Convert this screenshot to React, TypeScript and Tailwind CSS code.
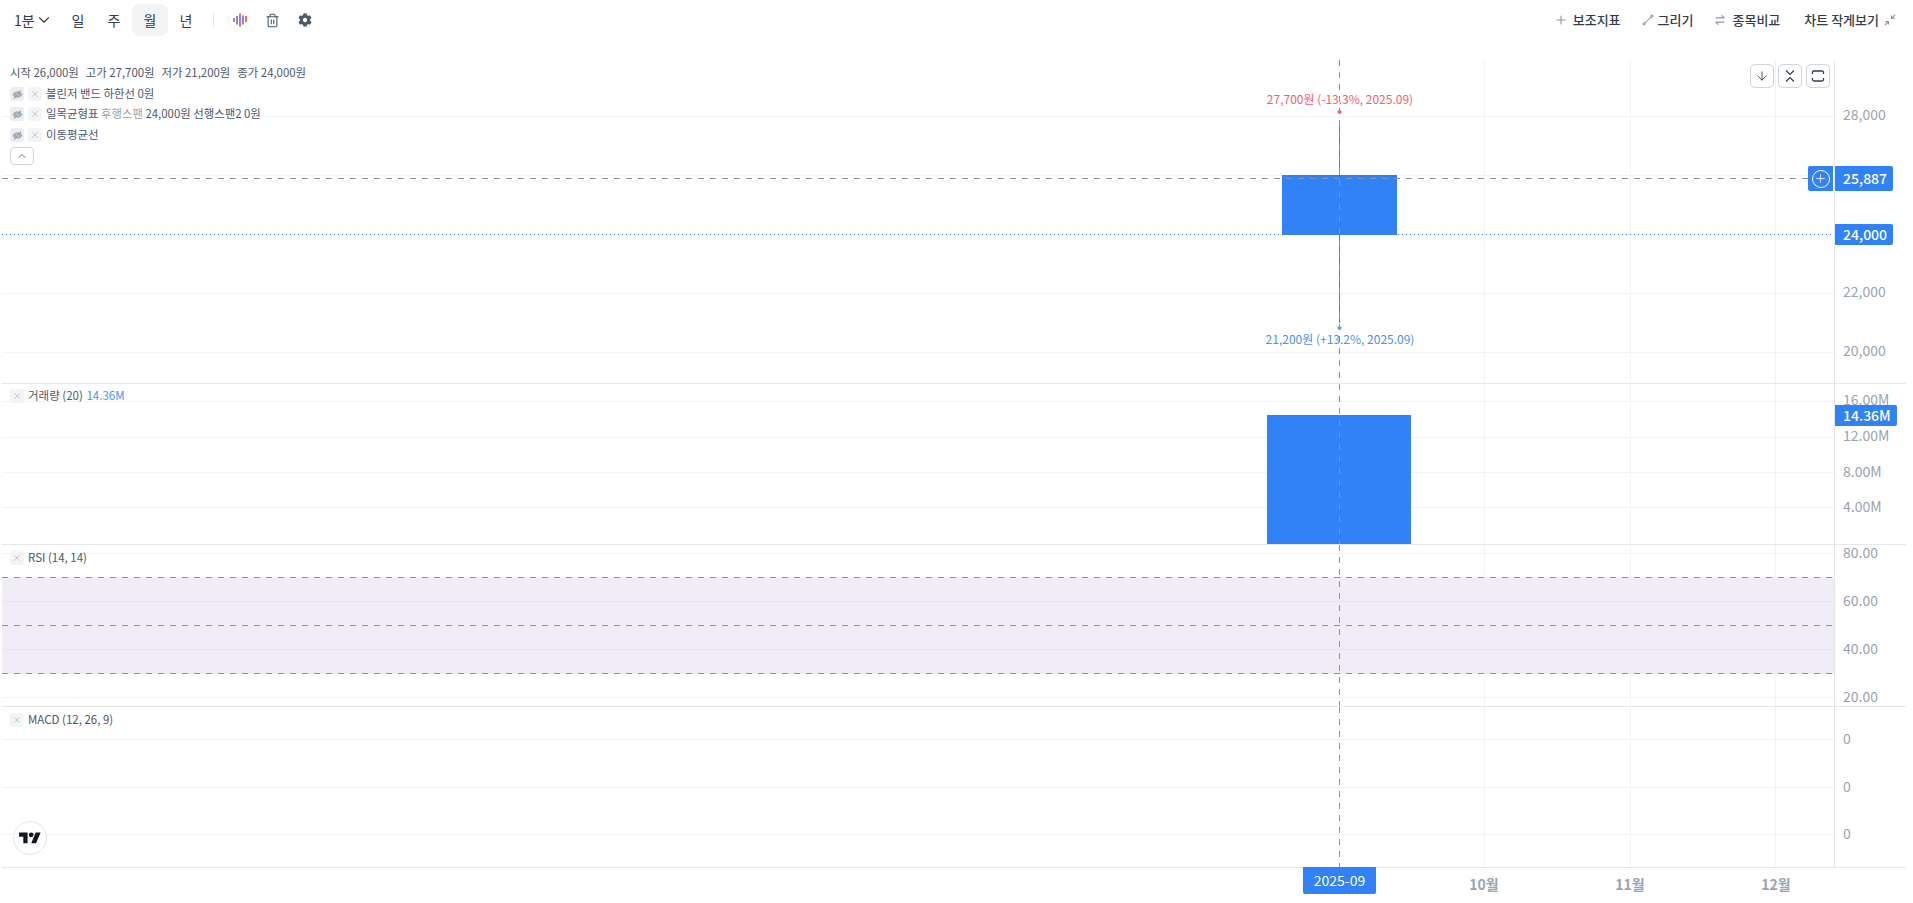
import type { ReactNode } from 'react';
import { ArrowDown, ChevronDown, ChevronUp, Plus, Trash2, X } from 'lucide-react';
import { FaCog } from 'react-icons/fa';

const BLUE = '#3182f6';
const GRID = '#f2f3f5';
const CROSS = '#8b95a1';
const CROSS_X = 1337.5;
const VERTICALS = [1482.5, 1628.5, 1773.5];

const XButton = () => (
  <span className="flex h-[14px] w-[14px] items-center justify-center rounded-[3px] bg-[#f2f4f6] text-[#a5adb8]">
    <X size={10} strokeWidth={1.5} />
  </span>
);

const EyeButton = () => (
  <span className="flex h-[14px] w-[14px] items-center justify-center rounded-[3px] bg-[#eceef1]">
    <svg width="11" height="11" viewBox="0 0 11 11" fill="none">
      <path d="M.5 5.5C2 3.2 3.7 2.2 5.5 2.2s3.5 1 5 3.3c-1.5 2.3-3.2 3.3-5 3.3S2 7.8.5 5.5z" fill="#a5adb8" />
      <circle cx="5.5" cy="5.5" r="1.2" fill="#eceef1" />
      <path d="M9 1.5 2 9.5" stroke="#8b95a1" strokeWidth="1.1" />
    </svg>
  </span>
);

const Grid = ({ lines, height }: { lines: number[]; height: number }) => (
  <>
    {lines.map((y) => (
      <line key={y} x1={0} x2={1832} y1={y + 0.5} y2={y + 0.5} stroke={GRID} />
    ))}
    {VERTICALS.map((x) => (
      <line key={x} x1={x} x2={x} y1={0} y2={height} stroke={GRID} />
    ))}
  </>
);

const Crosshair = ({ height }: { height: number }) => (
  <line x1={CROSS_X} x2={CROSS_X} y1={0} y2={height} stroke={CROSS} strokeDasharray="6 6" />
);

type PaneProps = {
  height: string;
  labels: { text: string; y: number }[];
  legend?: ReactNode;
  plot: ReactNode;
  tags?: ReactNode;
};

const Pane = ({ height, labels, legend, plot, tags }: PaneProps) => (
  <div className={`relative flex border-b border-[#e5e8eb] ${height}`}>
    <div className="relative flex-1">
      <svg className="block h-full w-full" shapeRendering="crispEdges">
        {plot}
      </svg>
      {legend}
    </div>
    <div className="relative w-[72px] border-l border-[#e5e8eb]">
      {labels.map((l) => (
        <span
          key={l.text + l.y}
          className="absolute left-[8px] -translate-y-1/2 text-[14px] leading-none text-[#9aa3af]"
          style={{ top: l.y }}
        >
          {l.text}
        </span>
      ))}
      {tags}
    </div>
  </div>
);

const IndicatorLegend = ({ top, children }: { top: string; children: ReactNode }) => (
  <div className={`absolute left-[8px] flex items-center gap-1 text-[11.5px] leading-none text-[#4e5968] ${top}`}>
    <XButton />
    {children}
  </div>
);

const MainLegend = () => (
  <div className="absolute left-[8px] top-[4px] flex flex-col items-start text-[11.4px] leading-none text-[#4e5968]">
    <div className="flex h-[17px] items-center gap-[7px] bg-white/80 pr-1">
      <span>시작 26,000원</span>
      <span>고가 27,700원</span>
      <span>저가 21,200원</span>
      <span>종가 24,000원</span>
    </div>
    <div className="mt-[5px] flex h-[16px] items-center gap-1">
      <EyeButton />
      <XButton />
      <span>볼린저 밴드 하한선 0원</span>
    </div>
    <div className="mt-[4px] flex h-[16px] items-center gap-1 bg-white/80 pr-1">
      <EyeButton />
      <XButton />
      <span>
        일목균형표 <span className="text-[#9aa3af]">후행스팬</span> 24,000원 선행스팬2 0원
      </span>
    </div>
    <div className="mt-[5px] flex h-[16px] items-center gap-1 bg-white/80 pr-1">
      <EyeButton />
      <XButton />
      <span>이동평균선</span>
    </div>
    <div className="mt-[4px] flex h-[18px] w-[24px] items-center justify-center rounded-[4px] border border-[#d1d6db] bg-white text-[#6b7684]">
      <ChevronUp size={12} strokeWidth={2} />
    </div>
  </div>
);

const CollapseIcon = () => (
  <svg width="14" height="14" viewBox="0 0 14 14" fill="none" stroke="#333d4b" strokeWidth="1.2">
    <path d="M3 1.5 7 5.5 11 1.5M3 12.5 7 8.5 11 12.5" />
  </svg>
);

const FrameIcon = () => (
  <svg width="14" height="14" viewBox="0 0 14 14" fill="none" stroke="#333d4b" strokeWidth="1.3">
    <path d="M1.5 5V3.5a1.5 1.5 0 0 1 1.5-1.5h8a1.5 1.5 0 0 1 1.5 1.5V5M1.5 9v1.5A1.5 1.5 0 0 0 3 12h8a1.5 1.5 0 0 0 1.5-1.5V9" />
  </svg>
);

const CandleIcon = () => (
  <svg width="14" height="14" viewBox="0 0 14 14" strokeWidth="1.6" fill="none">
    <path d="M1 5v4M7 0.5v13M13 3v6" stroke="#f04452" />
    <path d="M4 3v8.5M10 2.5v9" stroke="#3182f6" />
  </svg>
);

const DrawIcon = () => (
  <svg width="12" height="12" viewBox="0 0 14 14" fill="none" stroke="#8b95a1" strokeWidth="1.2">
    <circle cx="2.5" cy="11.5" r="1.3" />
    <circle cx="11.5" cy="2.5" r="1.3" />
    <path d="M3.5 10.5 10.5 3.5" />
  </svg>
);

const CompareIcon = () => (
  <svg width="12" height="12" viewBox="0 0 14 14" fill="none" stroke="#8b95a1" strokeWidth="1.3">
    <path d="M2 4.5h10M9 1.5l3 3M12 9.5H2M5 12.5l-3-3" />
  </svg>
);

const ShrinkIcon = () => (
  <svg width="12" height="12" viewBox="0 0 12 12" fill="none" stroke="#8b95a1" strokeWidth="1.1">
    <path d="M11 1 7.5 4.5M7.5 1.5v3h3M1 11l3.5-3.5M4.5 10.5v-3h-3" />
  </svg>
);

const TopBar = () => (
  <div className="flex h-[60px] items-start justify-between pl-[14px] pr-[17px] pt-[4px] text-[14px] text-[#333d4b]">
    <div className="flex h-[32px] items-center">
      <div className="flex w-[46px] items-center">
        <span>1분</span>
        <ChevronDown size={18} strokeWidth={1.5} />
      </div>
      {['일', '주', '월', '년'].map((t) => (
        <div
          key={t}
          className={`flex h-[32px] w-[36px] items-center justify-center rounded-lg ${t === '월' ? 'bg-[#f2f4f6]' : ''}`}
        >
          {t}
        </div>
      ))}
      <div className="ml-[9px] h-[16px] w-px bg-[#e5e8eb]" />
      <div className="ml-[19px] flex items-center gap-[18px]">
        <CandleIcon />
        <Trash2 size={15} strokeWidth={1.8} className="text-[#4e5968]" />
        <FaCog size={14} className="text-[#4e5968]" />
      </div>
    </div>
    <div className="flex h-[32px] items-center text-[13px] font-medium">
      <Plus size={14} strokeWidth={1.8} className="text-[#8b95a1]" />
      <span className="ml-[5px]">보조지표</span>
      <span className="ml-[21px]">
        <DrawIcon />
      </span>
      <span className="ml-[4px]">그리기</span>
      <span className="ml-[21px]">
        <CompareIcon />
      </span>
      <span className="ml-[6px]">종목비교</span>
      <span className="ml-[24px]">차트 작게보기</span>
      <span className="ml-[5px]">
        <ShrinkIcon />
      </span>
    </div>
  </div>
);

const ChartTools = () => (
  <div className="absolute right-[4px] top-[4px] flex gap-1">
    {[<ArrowDown key="a" size={14} strokeWidth={1.5} className="text-[#333d4b]" />, <CollapseIcon key="c" />, <FrameIcon key="f" />].map(
      (icon, i) => (
        <div key={i} className="flex h-[24px] w-[24px] items-center justify-center rounded-[5px] border border-[#d1d6db] bg-white">
          {icon}
        </div>
      ),
    )}
  </div>
);

const PriceTag = ({ text, top, wide }: { text: string; top: string; wide?: boolean }) => (
  <span
    className={`absolute left-0 flex items-center rounded-r-[2px] bg-[#3182f6] pb-[2px] pl-[8px] text-[14px] font-medium leading-none text-white ${top} ${wide ? 'h-[21px] w-[62px]' : 'h-[21px] w-[58px]'}`}
  >
    {text}
  </span>
);

const MainPane = () => (
  <Pane
    height="h-[324px]"
    labels={[
      { text: '28,000', y: 54 },
      { text: '22,000', y: 231 },
      { text: '20,000', y: 290 },
    ]}
    plot={
      <>
        <Grid lines={[56, 115, 174, 233, 292]} height={323} />
        <rect x={1280} y={115} width={115} height={60} fill={BLUE} />
        <line x1={CROSS_X} x2={CROSS_X} y1={63} y2={263} stroke={BLUE} />
        <line x1={0} x2={1832} y1={118.5} y2={118.5} stroke={CROSS} strokeDasharray="6 6" />
        <line x1={0} x2={1832} y1={174.5} y2={174.5} stroke={BLUE} strokeDasharray="1 3" />
        <Crosshair height={323} />
        <polygon points={`${CROSS_X},49.5 ${CROSS_X + 2.5},52 ${CROSS_X},54.5 ${CROSS_X - 2.5},52`} fill="#f4606c" shapeRendering="auto" />
        <polygon points={`${CROSS_X},265.5 ${CROSS_X + 2.5},268 ${CROSS_X},270.5 ${CROSS_X - 2.5},268`} fill="#5f9ef8" shapeRendering="auto" />
      </>
    }
    legend={
      <>
        <MainLegend />
        <ChartTools />
        <span className="absolute left-[1338px] top-[39px] -translate-x-1/2 -translate-y-1/2 whitespace-nowrap text-[12px] leading-none text-[#f4606c]">
          27,700원 (-13.3%, 2025.09)
        </span>
        <span className="absolute left-[1338px] top-[279px] -translate-x-1/2 -translate-y-1/2 whitespace-nowrap text-[12px] leading-none text-[#4b92f7]">
          21,200원 (+13.2%, 2025.09)
        </span>
        <span className="absolute right-[1px] top-[106px] flex h-[25px] w-[25px] items-center justify-center rounded-l-[2px] bg-[#3182f6]">
          <span className="flex h-[18px] w-[18px] items-center justify-center rounded-full border border-white text-white">
            <Plus size={13} strokeWidth={1.5} />
          </span>
        </span>
      </>
    }
    tags={
      <>
        <PriceTag text="25,887" top="top-[106px] !h-[25px]" />
        <PriceTag text="24,000" top="top-[164px]" />
      </>
    }
  />
);

const VolumePane = () => (
  <Pane
    height="h-[161px]"
    labels={[
      { text: '16.00M', y: 15 },
      { text: '12.00M', y: 51 },
      { text: '8.00M', y: 87 },
      { text: '4.00M', y: 122 },
    ]}
    plot={
      <>
        <Grid lines={[17, 53, 88, 123]} height={160} />
        <rect x={1265} y={31} width={144} height={129} fill={BLUE} />
        <Crosshair height={160} />
      </>
    }
    legend={
      <IndicatorLegend top="top-[5px]">
        <span>
          거래량 (20) <span className="ml-[1px] text-[#4b92f7]">14.36M</span>
        </span>
      </IndicatorLegend>
    }
    tags={<PriceTag text="14.36M" top="top-[21px]" wide />}
  />
);

const RsiPane = () => (
  <Pane
    height="h-[162px]"
    labels={[
      { text: '80.00', y: 7 },
      { text: '60.00', y: 55 },
      { text: '40.00', y: 103 },
      { text: '20.00', y: 151 },
    ]}
    plot={
      <>
        <rect x={0} y={32} width={1832} height={97} fill="#f0edf9" />
        {[8, 56, 104, 152].map((y) => (
          <line key={y} x1={0} x2={1832} y1={y + 0.5} y2={y + 0.5} stroke={y === 56 || y === 104 ? '#e9e5f5' : GRID} />
        ))}
        {VERTICALS.map((x) => (
          <line key={x} x1={x} x2={x} y1={0} y2={32} stroke={GRID} />
        ))}
        {VERTICALS.map((x) => (
          <line key={x} x1={x} x2={x} y1={129} y2={161} stroke={GRID} />
        ))}
        {[32, 80, 128].map((y) => (
          <line key={y} x1={0} x2={1832} y1={y + 0.5} y2={y + 0.5} stroke={CROSS} strokeDasharray="6 6" />
        ))}
        <Crosshair height={161} />
      </>
    }
    legend={
      <IndicatorLegend top="top-[6px]">
        <span>RSI (14, 14)</span>
      </IndicatorLegend>
    }
  />
);

const MacdPane = () => (
  <Pane
    height="h-[161px]"
    labels={[
      { text: '0', y: 31 },
      { text: '0', y: 79 },
      { text: '0', y: 126 },
    ]}
    plot={
      <>
        <Grid lines={[32, 80, 127]} height={160} />
        <Crosshair height={160} />
      </>
    }
    legend={
      <>
        <IndicatorLegend top="top-[6px]">
          <span>MACD (12, 26, 9)</span>
        </IndicatorLegend>
        <div className="absolute left-[11px] top-[114px] flex h-[34px] w-[34px] items-center justify-center rounded-full border border-[#e3e4ee] bg-white">
          <svg width="22" height="17" viewBox="0 0 36 28" fill="#131722">
            <path d="M14 22H7V11H0V4h14v18zM28 22h-8l7.5-18h8L28 22z" />
            <circle cx="20" cy="8" r="4" />
          </svg>
        </div>
      </>
    }
  />
);

const TimeAxis = () => (
  <div className="relative h-[35px] text-[14px] text-[#9aa3af]">
    {[
      { text: '10월', left: 'left-[1482px]' },
      { text: '11월', left: 'left-[1628px]' },
      { text: '12월', left: 'left-[1774px]' },
    ].map((t) => (
      <span key={t.text} className={`absolute top-[9px] -translate-x-1/2 font-semibold leading-none ${t.left}`}>
        {t.text}
      </span>
    ))}
    <span className="absolute left-[1301px] top-[-1px] flex h-[27px] w-[73px] items-center justify-center rounded-b-[2px] bg-[#3182f6] text-white">
      2025-09
    </span>
  </div>
);

export default function App() {
  return (
    <div
      className="h-[903px] w-[1913px] overflow-hidden bg-white"
      style={{ fontFamily: '"Noto Sans CJK KR", "Noto Sans", sans-serif' }}
    >
      <TopBar />
      <div className="ml-[2px] w-[1904px]">
        <MainPane />
        <VolumePane />
        <RsiPane />
        <MacdPane />
        <TimeAxis />
      </div>
    </div>
  );
}
